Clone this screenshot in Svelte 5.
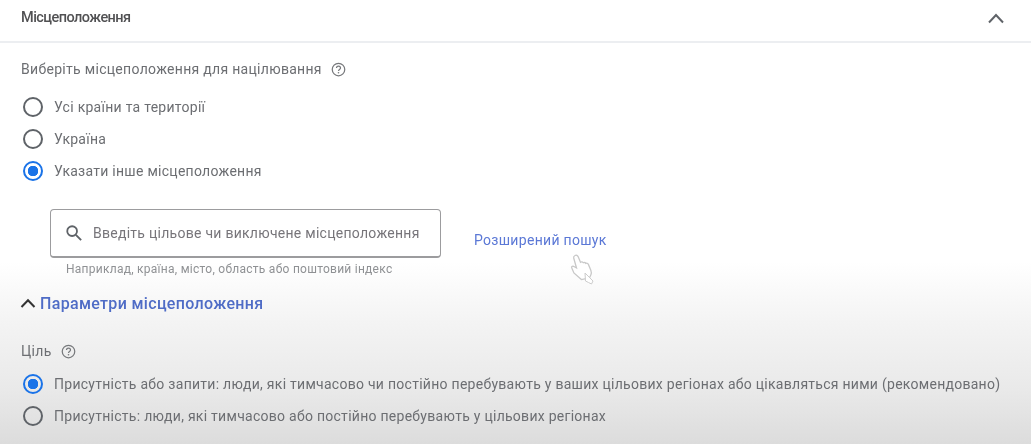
<script>
  const targets = ["Усі країни та території", "Україна", "Указати інше місцеположення"];
  const goals = [
    "Присутність або запити: люди, які тимчасово чи постійно перебувають у ваших цільових регіонах або цікавляться ними (рекомендовано)",
    "Присутність: люди, які тимчасово або постійно перебувають у цільових регіонах"
  ];
  let target = 2;
  let goal = 0;
</script>

{#snippet help()}
  <svg class="help" viewBox="0 0 24 24" aria-hidden="true">
    <circle cx="12" cy="12" r="10" fill="none" stroke="currentColor" stroke-width="2" />
    <path d="M8.8 9.6a3.2 3.2 0 0 1 6.4 0c0 2.3-3.2 2.4-3.2 4.6" fill="none" stroke="currentColor" stroke-width="2" />
    <circle cx="12" cy="17.2" r="1.3" fill="currentColor" />
  </svg>
{/snippet}

{#snippet radio(on)}
  <span class="radio" class:on></span>
{/snippet}

<main class="panel">
  <header class="head">
    <h2>Місцеположення</h2>
    <svg class="chev" viewBox="0 0 18 12" aria-hidden="true">
      <path d="M2 10.5 9 3l7 7.5" fill="none" stroke="currentColor" stroke-width="2" />
    </svg>
  </header>

  <section class="body">
    <div class="label first">Виберіть місцеположення для націлювання {@render help()}</div>

    <div class="options">
      {#each targets as t, i}
        <button class="opt" onclick={() => (target = i)}>
          {@render radio(target === i)}
          <span>{t}</span>
        </button>
      {/each}
    </div>

    <div class="search-row">
      <div class="search-col">
        <div class="search">
          <svg class="mag" viewBox="0 0 24 24" aria-hidden="true">
            <circle cx="9.5" cy="9.5" r="6.5" fill="none" stroke="currentColor" stroke-width="2.4" />
            <path d="m14.5 14.5 7 7" fill="none" stroke="currentColor" stroke-width="2.6" />
          </svg>
          <span>Введіть цільове чи виключене місцеположення</span>
        </div>
        <div class="hint">Наприклад, країна, місто, область або поштовий індекс</div>
      </div>
      <a class="adv" href="#top" onclick={(e) => e.preventDefault()}>Розширений пошук</a>
    </div>

    <div class="params">
      <svg viewBox="0 0 18 12" aria-hidden="true">
        <path d="M2.5 10 9 3.2 15.5 10" fill="none" stroke="currentColor" stroke-width="2" />
      </svg>
      <span>Параметри місцеположення</span>
    </div>

    <div class="label goal">Ціль {@render help()}</div>

    <div class="options goals">
      {#each goals as g, i}
        <button class="opt" onclick={() => (goal = i)}>
          {@render radio(goal === i)}
          <span>{g}</span>
        </button>
      {/each}
    </div>
  </section>

  <svg class="cursor" viewBox="0 0 26 32" aria-hidden="true">
    <path
      d="M5 2.5c1.400-.8 2.600 0 3.200 1.300l2.300 5.400c1-.7 2.200-.4 2.800.5.900-.5 2-.2 2.500.7 1-.4 2-.1 2.600 1l2.500 6.200c.6 1.500.6 2.900 0 4.200l-1.500 3.200-8 1.600-7.500-6.700L1.800 15c-.6-1.100.5-2.200 1.700-1.700l3 1.700L3.700 5c-.3-1 .3-2 1.300-2.500Z"
      fill="#fff" stroke="#c8c8c8" stroke-width="1.300"
    />
    <path d="m15 20 8 8-1.500 3-3-1.500-3-1.500Z" fill="#fff" stroke="#cccccc" stroke-width="1" />
  </svg>
</main>

<style>
  :global(body) {
    margin: 0;
    background: #fff;
  }

  /* source is a soft video frame, hence the slight blur */
  .panel {
    position: relative;
    width: 1031px;
    height: 444px;
    overflow: hidden;
    font-family: Roboto, "Noto Sans", sans-serif;
    color: #5f6368;
    background: linear-gradient(180deg, #fff 0, #fff 262px, #f4f4f4 320px, #e9e9e9 390px, #dcdcdc 444px);
    filter: blur(0.5px);
  }

  .head {
    height: 43px;
    box-sizing: border-box;
    display: flex;
    align-items: center;
    justify-content: space-between;
    padding: 0 26px 6px 21px;
    border-bottom: 2px solid #eceef1;
  }

  h2 {
    margin: 0;
    font-size: 14.5px;
    font-weight: 500;
    letter-spacing: -0.55px;
    color: #515153;
  }

  .chev {
    width: 18px;
    height: 12px;
    color: #5f6368;
  }

  .body {
    padding: 0 0 0 21px;
  }

  .label {
    display: flex;
    align-items: center;
    gap: 9px;
    font-size: 14px;
    letter-spacing: 0.3px;
    color: #6c6e72;
  }

  .label.first {
    margin-top: 17px;
    height: 18px;
  }

  .help {
    width: 15px;
    height: 15px;
    color: #77797c;
  }

  .options {
    display: flex;
    flex-direction: column;
    margin-top: 13px;
  }

  .opt {
    display: flex;
    align-items: center;
    gap: 11px;
    height: 32px;
    padding: 0 0 0 2px;
    border: 0;
    background: none;
    font: inherit;
    font-size: 14px;
    letter-spacing: 0.27px;
    color: #6c6e72;
    text-align: left;
    white-space: nowrap;
  }

  .radio {
    box-sizing: border-box;
    flex: none;
    width: 20px;
    height: 20px;
    border: 2px solid #5f6368;
    border-radius: 50%;
  }

  .radio.on {
    border-color: #1a73e8;
    background: radial-gradient(circle, #1a73e8 0 5px, transparent 5.500px);
  }

  .search-row {
    display: flex;
    align-items: flex-start;
    margin: 22px 0 0 29px;
  }

  .search {
    box-sizing: border-box;
    width: 391px;
    height: 49px;
    display: flex;
    align-items: center;
    gap: 10px;
    padding-left: 14px;
    border: 1px solid #9c9c9e;
    border-bottom-width: 2px;
    border-radius: 4px;
    font-size: 14px;
    letter-spacing: 0.27px;
    color: #77757a;
  }

  .mag {
    width: 18px;
    height: 18px;
    color: #5f6368;
  }

  .hint {
    margin: 4px 0 0 16px;
    font-size: 12px;
    letter-spacing: 0.26px;
    color: #8f9194;
  }

  .adv {
    margin: 23px 0 0 33px;
    font-size: 14px;
    letter-spacing: 0.3px;
    color: #5b78d6;
    text-decoration: none;
  }

  .params {
    display: flex;
    align-items: center;
    gap: 3px;
    margin: 18px 0 0 -2px;
    height: 18px;
    font-size: 16px;
    font-weight: 500;
    letter-spacing: 0.33px;
    color: #4f6cc6;
  }

  .params svg {
    width: 18px;
    height: 12px;
    color: #333;
  }

  .label.goal {
    margin-top: 30px;
    height: 18px;
  }

  .goals {
    margin-top: 8px;
  }

  .cursor {
    position: absolute;
    left: 570px;
    top: 253px;
    width: 26px;
    height: 32px;
  }
</style>
